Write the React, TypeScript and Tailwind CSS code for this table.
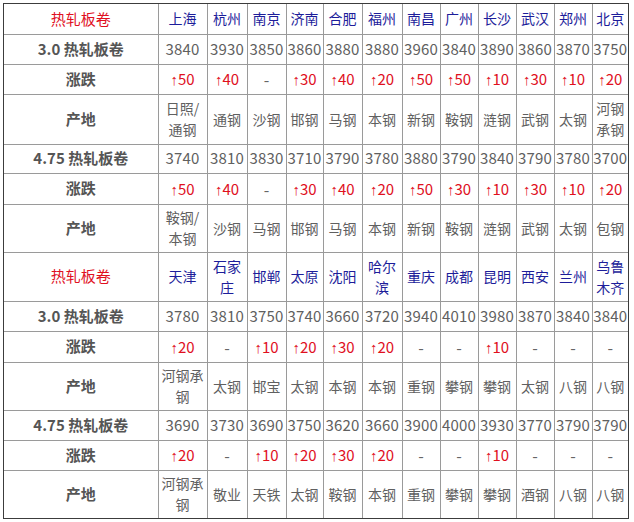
import React from "react";

type Block = {
  cities: string[];
  p30: string[];
  c30: string[];
  o30: string[];
  p475: string[];
  c475: string[];
  o475: string[];
};

const blocks: Block[] = [
  {
    cities: ["上海", "杭州", "南京", "济南", "合肥", "福州", "南昌", "广州", "长沙", "武汉", "郑州", "北京"],
    p30: ["3840", "3930", "3850", "3860", "3880", "3880", "3960", "3840", "3890", "3860", "3870", "3750"],
    c30: ["50", "40", "-", "30", "40", "20", "50", "50", "10", "30", "10", "20"],
    o30: ["日照/|通钢", "通钢", "沙钢", "邯钢", "马钢", "本钢", "新钢", "鞍钢", "涟钢", "武钢", "太钢", "河钢|承钢"],
    p475: ["3740", "3810", "3830", "3710", "3790", "3780", "3880", "3790", "3840", "3790", "3780", "3700"],
    c475: ["50", "40", "-", "30", "40", "20", "50", "30", "10", "30", "10", "20"],
    o475: ["鞍钢/|本钢", "沙钢", "马钢", "邯钢", "马钢", "本钢", "新钢", "鞍钢", "涟钢", "武钢", "太钢", "包钢"],
  },
  {
    cities: ["天津", "石家|庄", "邯郸", "太原", "沈阳", "哈尔|滨", "重庆", "成都", "昆明", "西安", "兰州", "乌鲁|木齐"],
    p30: ["3780", "3810", "3750", "3740", "3660", "3720", "3940", "4010", "3980", "3870", "3840", "3840"],
    c30: ["20", "-", "10", "20", "30", "20", "-", "-", "10", "-", "-", "-"],
    o30: ["河钢承|钢", "太钢", "邯宝", "太钢", "本钢", "本钢", "重钢", "攀钢", "攀钢", "太钢", "八钢", "八钢"],
    p475: ["3690", "3730", "3690", "3750", "3620", "3660", "3900", "4000", "3930", "3770", "3790", "3790"],
    c475: ["20", "-", "10", "20", "30", "20", "-", "-", "10", "-", "-", "-"],
    o475: ["河钢承|钢", "敬业", "天铁", "太钢", "鞍钢", "本钢", "重钢", "攀钢", "攀钢", "酒钢", "八钢", "八钢"],
  },
];

const colWidths = [
  "w-[154px]", "w-[49px]", "w-[40px]", "w-[39px]", "w-[37px]", "w-[39px]", "w-[40px]",
  "w-[38px]", "w-[38px]", "w-[38px]", "w-[38px]", "w-[38px]", "w-[36px]",
];

const cell = "border-r border-b border-[#9a9a9a] last:border-r-0 text-center align-middle p-0 overflow-hidden";

function Lines({ text }: { text: string }) {
  const parts = text.split("|");
  return (
    <>
      {parts.map((p, i) => (
        <div key={i} className="leading-[21px] whitespace-nowrap">{p}</div>
      ))}
    </>
  );
}

function Change({ v }: { v: string }) {
  if (v === "-") return <span className="text-[#666]">-</span>;
  return (
    <span className="text-[#e0101e] text-[15px]">
      <span className="font-['Liberation_Sans',sans-serif] text-[15px]">↑</span>
      {v}
    </span>
  );
}

function Label({ children, red }: { children: React.ReactNode; red?: boolean }) {
  return (
    <td className={`${cell} ${red ? "text-[#e0101e]" : "text-[#555] font-bold"} text-[15px]`}>
      {children}
    </td>
  );
}

function BlockRows({ b, heights, lastBlock }: { b: Block; heights: string[]; lastBlock: boolean }) {
  const rows = [
    { key: "h", label: "热轧板卷", red: true, vals: b.cities, kind: "city" },
    { key: "p30", label: "3.0 热轧板卷", vals: b.p30, kind: "num" },
    { key: "c30", label: "涨跌", vals: b.c30, kind: "chg" },
    { key: "o30", label: "产地", vals: b.o30, kind: "orig" },
    { key: "p475", label: "4.75 热轧板卷", vals: b.p475, kind: "num" },
    { key: "c475", label: "涨跌", vals: b.c475, kind: "chg" },
    { key: "o475", label: "产地", vals: b.o475, kind: "orig" },
  ];
  return (
    <>
      {rows.map((r, i) => {
        const isLast = lastBlock && i === rows.length - 1;
        return (
          <tr key={r.key} className={`${heights[i]} ${isLast ? "[&>td]:border-b-0" : ""}`}>
            <Label red={r.red}>{r.label}</Label>
            {r.vals.map((v, j) => {
              if (r.kind === "city")
                return (
                  <td key={j} className={`${cell} text-[#1d1d9a] text-[14px]`}>
                    <Lines text={v} />
                  </td>
                );
              if (r.kind === "num")
                return (
                  <td key={j} className={`${cell} text-[#606060] text-[15px] tracking-[0.2px]`}>
                    {v}
                  </td>
                );
              if (r.kind === "chg")
                return (
                  <td key={j} className={`${cell}`}>
                    <Change v={v} />
                  </td>
                );
              return (
                <td key={j} className={`${cell} text-[#606060] text-[14px]`}>
                  <Lines text={v} />
                </td>
              );
            })}
          </tr>
        );
      })}
    </>
  );
}

export default function App() {
  const h1 = ["h-[30px]", "h-[30px]", "h-[30px]", "h-[50px]", "h-[29px]", "h-[31px]", "h-[48px]"];
  const h2 = ["h-[49px]", "h-[30px]", "h-[31px]", "h-[48px]", "h-[30px]", "h-[30px]", "h-[48px]"];
  return (
    <div className="w-[634px] h-[522px] bg-white pl-[3px] pt-[3px] font-['Noto_Sans_CJK_SC','Noto_Sans',sans-serif]">
      <div className="w-[626px] border border-[#3c3c3c]">
        <table className="w-[624px] table-fixed border-collapse">
          <colgroup>
            {colWidths.map((w, i) => (
              <col key={i} className={w} />
            ))}
          </colgroup>
          <tbody>
            <BlockRows b={blocks[0]} heights={h1} lastBlock={false} />
            <BlockRows b={blocks[1]} heights={h2} lastBlock={true} />
          </tbody>
        </table>
      </div>
    </div>
  );
}
